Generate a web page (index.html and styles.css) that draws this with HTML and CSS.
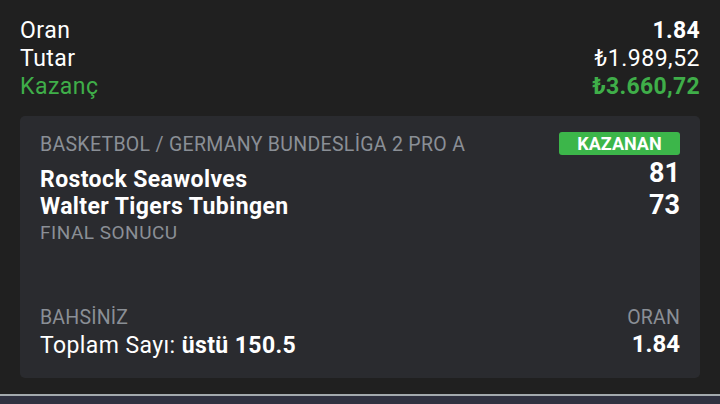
FILE: index.html
```html
<!DOCTYPE html>
<html lang="tr">
<head>
  <meta charset="UTF-8">
  <meta name="viewport" content="width=device-width, initial-scale=1.0">
  <title>Kupon Detayı</title>
  <link rel="stylesheet" href="styles.css">
</head>
<body>
  <div class="summary">
    <div class="row"><span>Oran</span><strong>1.84</strong></div>
    <div class="row"><span>Tutar</span><span>₺1.989,52</span></div>
    <div class="row win"><span>Kazanç</span><strong>₺3.660,72</strong></div>
  </div>

  <div class="card">
    <div class="match">
      <div class="match-info">
        <div class="category">BASKETBOL / GERMANY BUNDESLİGA 2 PRO A</div>
        <div class="team">Rostock Seawolves</div>
        <div class="team">Walter Tigers Tubingen</div>
        <div class="result-label">FINAL SONUCU</div>
      </div>
      <div class="match-score">
        <span class="badge">KAZANAN</span>
        <div class="score">81</div>
        <div class="score">73</div>
      </div>
    </div>

    <div class="bet">
      <div>
        <div class="label">BAHSİNİZ</div>
        <div class="pick">Toplam Sayı: <strong>üstü 150.5</strong></div>
      </div>
      <div class="odds">
        <div class="label">ORAN</div>
        <div class="odds-value">1.84</div>
      </div>
    </div>
  </div>

  <div class="footer"></div>
</body>
</html>
```

FILE: styles.css
```css
body { margin: 0; background: #202020; color: #fff; font-family: Roboto, "Noto Sans", sans-serif; overflow: hidden; }

.summary { padding: 17px 20px 0; }
.row { display: flex; justify-content: space-between; font-size: 23px; line-height: 28px; letter-spacing: 0.5px; }
.row strong { font-weight: 700; letter-spacing: 0.3px; }
.row.win { color: #3fae49; }

.card { margin: 15px 20px 0; height: 262px; box-sizing: border-box; padding: 16px 20px 18px; background: #2a2b2f; border-radius: 5px; display: flex; flex-direction: column; }
.match { display: flex; justify-content: space-between; }
.category { color: #8a8f96; font-size: 19.5px; line-height: 25px; letter-spacing: 0.3px; }
.team { font-size: 23px; font-weight: 700; line-height: 27px; letter-spacing: 0.4px; }
.category + .team { margin-top: 9px; }
.result-label { color: #8a8f96; font-size: 19px; line-height: 24px; letter-spacing: 0.5px; margin-top: 1px; }

.match-score { display: flex; flex-direction: column; align-items: flex-end; }
.badge { display: block; width: 121px; height: 23px; box-sizing: border-box; background: #3cb64a; border-radius: 3px; font-size: 18px; font-weight: 700; line-height: 23px; text-align: center; }
.score { font-size: 27px; font-weight: 700; line-height: 32px; }
.badge + .score { margin-top: 2px; }

.bet { margin-top: auto; display: flex; justify-content: space-between; }
.label { color: #8a8f96; font-size: 19.5px; line-height: 25px; letter-spacing: 0.2px; }
.pick { font-size: 23px; line-height: 28px; letter-spacing: 0.4px; margin-top: 2px; }
.pick strong { font-weight: 700; }
.odds { text-align: right; }
.odds-value { font-size: 24px; font-weight: 700; line-height: 28px; }

.footer { margin-top: 16px; height: 20px; border-top: 2px solid #a3a9ad; background: #2f3140; }
```
